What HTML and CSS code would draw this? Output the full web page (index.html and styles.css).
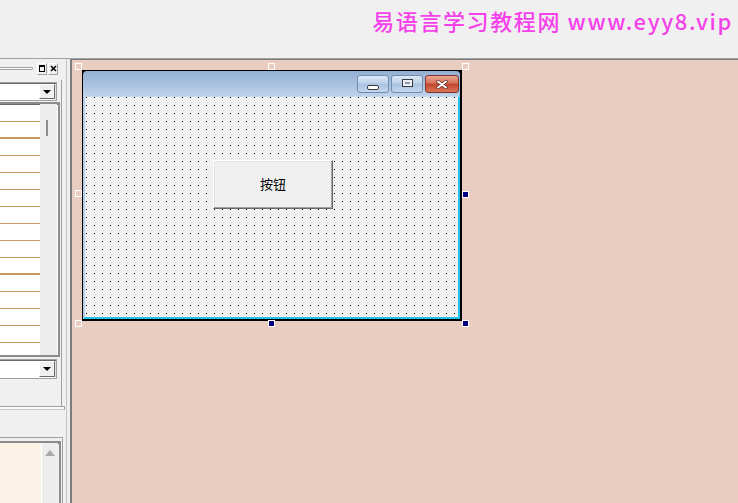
FILE: index.html
```html
<!DOCTYPE html>
<html lang="zh-CN">
<head>
    <meta charset="UTF-8">
    <title>易语言 窗口设计</title>
    <link rel="stylesheet" href="styles.css">
</head>
<body>
<header class="banner"><span class="brand">易语言学习教程网 www.eyy8.vip</span></header>
<div class="work">
    <aside class="panel">
        <div class="ptitle">
            <span class="grip"></span>
            <span class="tbtn"><span class="max-ico"></span></span>
            <span class="tbtn"><svg width="7" height="7" viewBox="0 0 7 7"><path d="M1 1L6 6M6 1L1 6" stroke="#000" stroke-width="1.5"/></svg></span>
        </div>
        <div class="dock">
            <div class="combo"><span class="combo-text"></span><span class="drop"></span></div>
            <div class="list">
                <div class="rows">
                    <div class="row"></div>
                    <div class="row thick"></div>
                    <div class="row"></div>
                    <div class="row"></div>
                    <div class="row"></div>
                    <div class="row"></div>
                    <div class="row"></div>
                    <div class="row"></div>
                    <div class="row"></div>
                    <div class="row thick"></div>
                    <div class="row"></div>
                    <div class="row"></div>
                    <div class="row"></div>
                    <div class="row"></div>
                </div>
                <div class="vscroll"><span class="thumb"></span></div>
            </div>
            <div class="combo combo2"><span class="combo-text"></span><span class="drop"></span></div>
        </div>
        <div class="sep"></div>
        <div class="notes">
            <div class="notes-box">
                <div class="notes-body"></div>
                <div class="vscroll"><span class="up"></span></div>
            </div>
        </div>
    </aside>
    <div class="splitter"></div>
    <main class="design">
        <div class="form-wrap">
            <div class="form">
                <div class="caption">
                    <span class="cbtn min"><span class="min-ico"></span></span>
                    <span class="cbtn max"><span class="max-box"></span></span>
                    <span class="cbtn close"><svg width="12" height="9" viewBox="0 0 12 9"><path d="M2 1.5L10 7.5M10 1.5L2 7.5" stroke="#5a2a22" stroke-width="3.4" stroke-linecap="round"/><path d="M2 1.5L10 7.5M10 1.5L2 7.5" stroke="#fff" stroke-width="2" stroke-linecap="round"/></svg></span>
                </div>
                <div class="client">
                    <svg class="grid" width="372" height="220">
                        <defs>
                            <pattern id="dots" width="8" height="8" patternUnits="userSpaceOnUse">
                                <rect x="1" y="0" width="1" height="1" fill="#000"/>
                            </pattern>
                        </defs>
                        <rect width="372" height="220" fill="url(#dots)"/>
                    </svg>
                    <div class="button">按钮</div>
                </div>
            </div>
            <span class="handle h-tl"></span>
            <span class="handle h-tm"></span>
            <span class="handle h-tr"></span>
            <span class="handle h-ml"></span>
            <span class="handle h-mr on"></span>
            <span class="handle h-bl"></span>
            <span class="handle h-bm on"></span>
            <span class="handle h-br on"></span>
        </div>
    </main>
</div>
</body>
</html>
```

FILE: styles.css
```css
body{
    margin:0;
    width:738px;
    height:503px;
    overflow:hidden;
    background:#f0f0f0;
    font-family:"Noto Sans CJK SC","Noto Sans",sans-serif;
}

/* 顶部标题 */
.banner{
    height:59px;
    box-sizing:border-box;
    border-bottom:1px solid #a0a0a0;
    text-align:right;
    padding:5px 5px 0 0;
}
.brand{
    font-size:22px;
    font-weight:500;
    line-height:30px;
    letter-spacing:1.6px;
    color:#f541ea;
}

.work{display:flex;height:444px;}

/* 左侧面板 */
.panel{
    width:66px;
    border-right:1px solid #c4c4c4;
    display:flex;
    flex-direction:column;
}
.ptitle{height:19px;display:flex;align-items:center;}
.grip{
    width:33px;height:3px;
    box-sizing:border-box;
    border:1px solid #a0a0a0;border-left:0;
    background:#fff;
    border-radius:0 2px 2px 0;
    margin-right:4px;
}
.tbtn{
    width:10px;height:12px;
    box-sizing:border-box;
    border:1px solid;
    border-color:#fff #a0a0a0 #a0a0a0 #fff;
    display:flex;align-items:center;justify-content:center;
    margin-right:1px;
}
.max-ico{
    width:6px;height:7px;
    box-sizing:border-box;
    border:1px solid #000;border-top-width:2px;
}

.dock{
    width:61px;
    border-right:1px solid #a0a0a0;
    margin-top:2px;
    padding:2px 0 27px;
}
.combo{
    width:57px;height:19px;
    box-sizing:border-box;
    border:1px solid #a0a0a0;border-left:0;
    box-shadow:inset 0 1px 0 #696969,inset -1px 0 0 #e0e0e0;
    background:#fff;
    display:flex;
    padding:1px 1px 1px 0;
}
.combo2{height:20px;margin-top:2px;}
.combo-text{flex:1;}
.drop{
    width:16px;
    box-sizing:border-box;
    border:1px solid;
    border-color:#fff #696969 #696969 #fff;
    background:#f0f0f0;
    display:flex;align-items:center;justify-content:center;
}
.drop:after{
    content:"";
    border-left:4px solid transparent;
    border-right:4px solid transparent;
    border-top:4px solid #000;
}

.list{
    width:60px;height:255px;
    box-sizing:border-box;
    margin-top:1px;
    border:2px solid #8c8c8c;border-left:0;
    box-shadow:inset 0 1px 0 #696969;
    display:flex;
    background:#fff;
}
.rows{width:40px;padding-top:1px;}
.row{height:17px;box-sizing:border-box;border-bottom:1px solid #c89c60;}
.row.thick{border-bottom-width:2px;}
.vscroll{width:17px;background:#ededed;display:flex;justify-content:center;}
.thumb{width:2px;height:16px;background:#8c8c8c;margin-top:16px;margin-left:-3px;}

.sep{
    width:65px;height:4px;
    box-sizing:border-box;
    border-top:1px solid #a0a0a0;
    border-bottom:1px solid #c8c8c8;
    border-right:1px solid #a0a0a0;
    background:#fafafa;
}

.notes{
    flex:1;
    width:62px;
    margin-top:27px;
    border-top:1px solid #a0a0a0;
    border-right:1px solid #a0a0a0;
    padding-top:3px;
    display:flex;
}
.notes-box{
    width:59px;
    border-top:2px solid #8c8c8c;
    border-right:2px solid #8c8c8c;
    box-shadow:inset 0 1px 0 #696969;
    display:flex;
}
.notes-body{width:41px;background:#fcf3e7;}
.notes-box .vscroll{width:16px;border-left:1px solid #fff;}
.up{
    margin-top:7px;
    width:0;height:0;
    border-left:5px solid transparent;
    border-right:5px solid transparent;
    border-bottom:6px solid #a8a8a8;
}

.splitter{width:3px;}

/* 设计区 */
.design{
    flex:1;
    border-left:2px solid #7c7c7c;
    border-top:1px solid #7c7c7c;
    background:#e9cdc0;
}
.form-wrap{
    position:relative;
    width:380px;height:251px;
    margin:10px 0 0 10px;
}
.form{
    width:380px;height:251px;
    box-sizing:border-box;
    border:solid #000;
    border-width:1px 2px 2px 1px;
    background:#000;
    display:flex;
    flex-direction:column;
}
.caption{
    height:26px;
    box-sizing:border-box;
    background:linear-gradient(#93afd1,#c0d4ed);
    border-radius:4px 4px 0 0;
    border-right:1px solid #8fc9ef;
    display:flex;
    justify-content:flex-end;
    align-items:flex-start;
    padding:4px 0 0 0;
}
.cbtn{
    width:32px;height:18px;
    box-sizing:border-box;
    border:1px solid #6f8bb0;
    border-radius:3px;
    background:linear-gradient(#dde8f6,#bcd1ea 45%,#a8c1e0 50%,#c5d7ee);
    margin-left:2px;
    display:flex;justify-content:center;align-items:center;
}
.cbtn.close{
    width:34px;
    border-color:#80342a;
    background:linear-gradient(#eba693,#d66f57 45%,#c2452b 50%,#d8755a);
}
.min-ico{
    width:12px;height:5px;
    box-sizing:border-box;
    border:1px solid #3a3a3a;
    border-radius:2px;
    background:#fff;
    margin-top:6px;
}
.max-box{
    width:11px;height:8px;
    box-sizing:border-box;
    border:1px solid #3a3a3a;
    background:#8b9bb1;
    box-shadow:inset 0 0 0 2px #eef2f8;
    margin-top:-2px;
}
.client{
    flex:1;
    position:relative;
    overflow:hidden;
    background:#f0f0f0;
    border-left:2px solid #b3ccee;
    border-right:2px solid #1fc1e8;
    border-bottom:2px solid #1fc1e8;
}
.grid{position:absolute;top:0;left:0;}
.button{
    position:relative;
    width:120px;height:49px;
    box-sizing:border-box;
    margin:63px 0 0 128px;
    background:#f0f0f0;
    border:1px solid;
    border-color:#fff #696969 #696969 #fff;
    box-shadow:inset -1px -1px 0 #a0a0a0,inset 1px 1px 0 #e3e3e3;
    display:flex;align-items:center;justify-content:center;
    font-size:13px;
    line-height:1;
    padding-bottom:3px;
    color:#000;
}

.handle{
    position:absolute;
    width:7px;height:7px;
    box-sizing:border-box;
    border:1px solid #fff;
}
.handle.on{background:#000080;}
.h-tl{left:-7px;top:-7px;}
.h-tm{left:186px;top:-7px;}
.h-tr{left:380px;top:-7px;}
.h-ml{left:-7px;top:120px;}
.h-mr{left:380px;top:121px;}
.h-bl{left:-7px;top:250px;}
.h-bm{left:186px;top:250px;}
.h-br{left:380px;top:250px;}
```
